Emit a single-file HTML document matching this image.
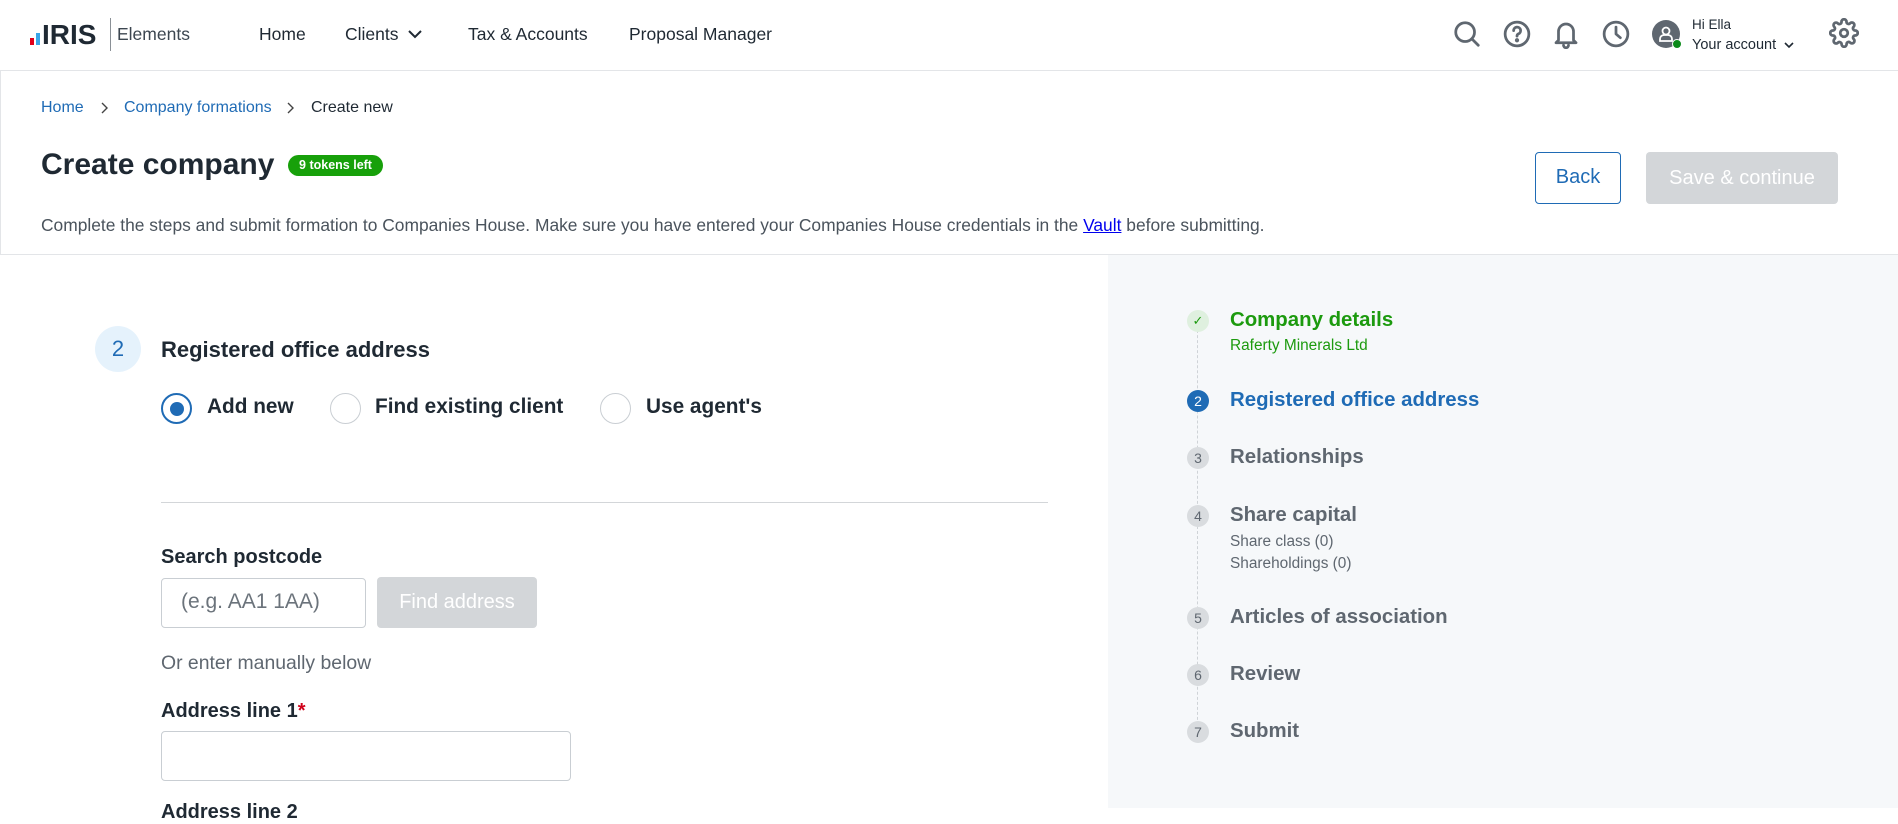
<!DOCTYPE html>
<html><head><meta charset="utf-8"><style>
*{margin:0;padding:0;box-sizing:border-box}
body{width:1898px;height:808px;overflow:hidden;position:relative;font-family:"Liberation Sans",Arial,sans-serif;background:#fff;color:#1f2933}
.a{position:absolute;white-space:nowrap}
.nav{font-size:17.5px;color:#1f2933;top:24px}
.ico{position:absolute;top:19px;width:30px;height:30px}
.ico svg{width:30px;height:30px;fill:none;stroke:#5f6770;stroke-width:2.2;stroke-linecap:round;stroke-linejoin:round}
.rad{position:absolute;width:31px;height:31px;border-radius:50%;border:1.5px solid #c9ced3;background:#fff;top:393px}
.rl{font-size:20.8px;font-weight:bold;top:395px;color:#1f2933}
.lbl{font-size:20px;font-weight:bold;color:#1f2933}
.inp{position:absolute;border:1.5px solid #c9ced3;border-radius:4px;background:#fff}
.sc{position:absolute;left:1187px;width:22px;height:22px;border-radius:50%;background:#d9dcdf;color:#5f6770;font-size:14px;text-align:center;line-height:22px}
.st{position:absolute;left:1230px;font-size:20.4px;font-weight:bold;color:#5f6770;white-space:nowrap}
.ss{position:absolute;left:1230px;font-size:15.4px;color:#5f6770;white-space:nowrap}
</style></head><body>
<!-- header -->
<div class="a" style="left:0;top:0;width:1898px;height:71px;border-bottom:1px solid #e3e5e8;background:#fff"></div>
<div class="a" style="left:30px;top:38px;width:4px;height:7px;background:#e1001a"></div>
<div class="a" style="left:36px;top:33px;width:4px;height:12px;background:#3aa6e8"></div>
<div class="a" style="left:42px;top:19px;font-size:28px;font-weight:bold;color:#1f2933;letter-spacing:0px">IRIS</div>
<div class="a" style="left:110px;top:18px;width:1px;height:33px;background:#8a9096"></div>
<div class="a" style="left:117px;top:24px;font-size:17.5px;color:#3c4650">Elements</div>
<div class="a nav" style="left:259px">Home</div>
<div class="a nav" style="left:345px">Clients <svg width="16" height="12" viewBox="0 0 16 12" style="margin-left:4px"><path d="M2 3l6 6 6-6" stroke="#1f2933" stroke-width="2" fill="none"/></svg></div>
<div class="a nav" style="left:468px">Tax &amp; Accounts</div>
<div class="a nav" style="left:629px">Proposal Manager</div>
<div class="ico" style="left:1452px"><svg viewBox="0 0 24 24"><circle cx="10.5" cy="10.5" r="7.5"/><path d="M16 16l5 5"/></svg></div>
<div class="ico" style="left:1502px"><svg viewBox="0 0 24 24"><circle cx="12" cy="12" r="9.5"/><path d="M9.3 9.3a2.8 2.8 0 1 1 3.8 2.6c-.8.4-1.1.9-1.1 1.8"/><circle cx="12" cy="17" r=".6" fill="#5f6770"/></svg></div>
<div class="ico" style="left:1551px"><svg viewBox="0 0 24 24"><path d="M6 17V10a6 6 0 0 1 12 0v7l2 2H4z"/><path d="M10 21a2 2 0 0 0 4 0"/></svg></div>
<div class="ico" style="left:1601px"><svg viewBox="0 0 24 24"><circle cx="12" cy="12" r="9.5"/><path d="M12 6.5V12l3.5 3"/></svg></div>
<div class="a" style="left:1652px;top:20px;width:28px;height:28px;border-radius:50%;background:#5f6770"></div>
<svg class="a" style="left:1652px;top:20px" width="28" height="28" viewBox="0 0 28 28"><circle cx="14" cy="11" r="3.5" stroke="#fff" stroke-width="1.8" fill="none"/><path d="M8 21v-2a4 4 0 0 1 4-4h4a4 4 0 0 1 4 4v2z" stroke="#fff" stroke-width="1.8" fill="none"/></svg>
<div class="a" style="left:1672px;top:39px;width:10px;height:10px;border-radius:50%;background:#0b8a1a;border:1px solid #fff"></div>
<div class="a" style="left:1692px;top:17px;font-size:13.5px;color:#1f2933">Hi Ella</div>
<div class="a" style="left:1692px;top:37px;font-size:14.5px;color:#1f2933">Your account <svg width="10" height="8" viewBox="0 0 10 8" style="margin-left:4px"><path d="M1 2l4 4 4-4" stroke="#1f2933" stroke-width="1.6" fill="none"/></svg></div>
<div class="ico" style="left:1829px;top:18px"><svg viewBox="0 0 24 24"><circle cx="12" cy="12" r="3"/><path d="M19.4 15a1.65 1.65 0 0 0 .33 1.820l.06.06a2 2 0 1 1-2.83 2.83l-.06-.06a1.65 1.65 0 0 0-1.82-.33 1.65 1.650 0 0 0-1 1.51V21a2 2 0 1 1-4 0v-.09A1.65 1.65 0 0 0 9 19.4a1.65 1.65 0 0 0-1.82.33l-.06.06a2 2 0 1 1-2.83-2.83l.06-.06A1.65 1.65 0 0 0 4.68 15a1.65 1.65 0 0 0-1.51-1H3a2 2 0 1 1 0-4h.09A1.65 1.65 0 0 0 4.6 9a1.65 1.65 0 0 0-.33-1.82l-.06-.06a2 2 0 1 1 2.830-2.83l.06.06A1.65 1.65 0 0 0 9 4.68a1.65 1.65 0 0 0 1-1.51V3a2 2 0 1 1 4 0v.09a1.65 1.65 0 0 0 1 1.51 1.65 1.65 0 0 0 1.82-.33l.06-.06a2 2 0 1 1 2.83 2.83l-.06.06A1.65 1.65 0 0 0 19.4 9a1.65 1.65 0 0 0 1.51 1H21a2 2 0 1 1 0 4h-.09a1.65 1.65 0 0 0-1.51 1z"/></svg></div>
<!-- title panel -->
<div class="a" style="left:0;top:71px;width:1898px;height:184px;border-bottom:1px solid #e3e5e8;border-left:1px solid #e3e5e8"></div>
<div class="a" style="left:41px;top:99px;font-size:16px;color:#1f6bb5">Home</div>
<svg class="a" style="left:100px;top:101px" width="10" height="14" viewBox="0 0 10 14"><path d="M2 2l5 5-5 5" stroke="#444" stroke-width="1.4" fill="none"/></svg>
<div class="a" style="left:124px;top:99px;font-size:16px;color:#1f6bb5">Company formations</div>
<svg class="a" style="left:286px;top:101px" width="10" height="14" viewBox="0 0 10 14"><path d="M2 2l5 5-5 5" stroke="#444" stroke-width="1.4" fill="none"/></svg>
<div class="a" style="left:311px;top:99px;font-size:16px;color:#1f2933">Create new</div>
<div class="a" style="left:41px;top:148px;font-size:30px;font-weight:bold;color:#1f2933">Create company</div>
<div class="a" style="left:288px;top:155px;height:21px;width:95px;border-radius:11px;background:#17a00a;color:#fff;font-size:12.5px;font-weight:bold;text-align:center;line-height:21px">9 tokens left</div>
<div class="a" style="left:41px;top:215px;font-size:17.4px;color:#4a535c">Complete the steps and submit formation to Companies House. Make sure you have entered your Companies House credentials in the <span style="color:#0000ee;text-decoration:underline">Vault</span> before submitting.</div>
<div class="a" style="left:1535px;top:152px;width:86px;height:52px;border:1.5px solid #1f6bb5;border-radius:4px;color:#1f6bb5;font-size:20px;text-align:center;line-height:49px">Back</div>
<div class="a" style="left:1646px;top:152px;width:192px;height:52px;border-radius:4px;background:#d3d6d9;color:#fff;font-size:20px;text-align:center;line-height:52px">Save &amp; continue</div>
<!-- right panel -->
<div class="a" style="left:1108px;top:255px;width:790px;height:553px;background:#f6f8fa"></div>
<div class="a" style="left:1197px;top:320px;height:415px;border-left:1px dashed #cfd3d7"></div>
<div class="sc" style="top:310px;background:#dff0df;color:#1c9a0e;font-size:13px">&#10003;</div>
<div class="st" style="top:309px;color:#1c9a0e">Company details</div>
<div class="ss" style="top:337px;color:#1c9a0e">Raferty Minerals Ltd</div>
<div class="sc" style="top:390px;background:#1f6bb5;color:#fff">2</div>
<div class="st" style="top:389px;color:#1f6bb5">Registered office address</div>
<div class="sc" style="top:447px">3</div>
<div class="st" style="top:446px">Relationships</div>
<div class="sc" style="top:505px">4</div>
<div class="st" style="top:504px">Share capital</div>
<div class="ss" style="top:533px">Share class (0)</div>
<div class="ss" style="top:555px">Shareholdings (0)</div>
<div class="sc" style="top:607px">5</div>
<div class="st" style="top:606px">Articles of association</div>
<div class="sc" style="top:664px">6</div>
<div class="st" style="top:663px">Review</div>
<div class="sc" style="top:721px">7</div>
<div class="st" style="top:720px">Submit</div>
<!-- form -->
<div class="a" style="left:95px;top:326px;width:46px;height:46px;border-radius:50%;background:#e5f2fc;color:#1f6bb5;font-size:22px;text-align:center;line-height:46px">2</div>
<div class="a" style="left:161px;top:337px;font-size:22px;font-weight:bold;color:#1f2933">Registered office address</div>
<div class="rad" style="left:161px;border:2px solid #1f6bb5"><div style="position:absolute;left:6.5px;top:6.5px;width:14px;height:14px;border-radius:50%;background:#1f6bb5"></div></div>
<div class="a rl" style="left:207px">Add new</div>
<div class="rad" style="left:330px"></div>
<div class="a rl" style="left:375px">Find existing client</div>
<div class="rad" style="left:600px"></div>
<div class="a rl" style="left:646px">Use agent's</div>
<div class="a" style="left:161px;top:502px;width:887px;height:1px;background:#d3d6d9"></div>
<div class="a lbl" style="left:161px;top:546px">Search postcode</div>
<div class="inp" style="left:161px;top:578px;width:205px;height:50px"></div>
<div class="a" style="left:181px;top:590px;font-size:21px;color:#6b737b">(e.g. AA1 1AA)</div>
<div class="a" style="left:377px;top:577px;width:160px;height:51px;border-radius:4px;background:#d3d6d9;color:#fff;font-size:20px;text-align:center;line-height:51px">Find address</div>
<div class="a" style="left:161px;top:652px;font-size:19.4px;color:#5f6770">Or enter manually below</div>
<div class="a lbl" style="left:161px;top:700px">Address line 1<span style="color:#d0021b">*</span></div>
<div class="inp" style="left:161px;top:731px;width:410px;height:50px"></div>
<div class="a lbl" style="left:161px;top:801px">Address line 2</div>
</body></html>
